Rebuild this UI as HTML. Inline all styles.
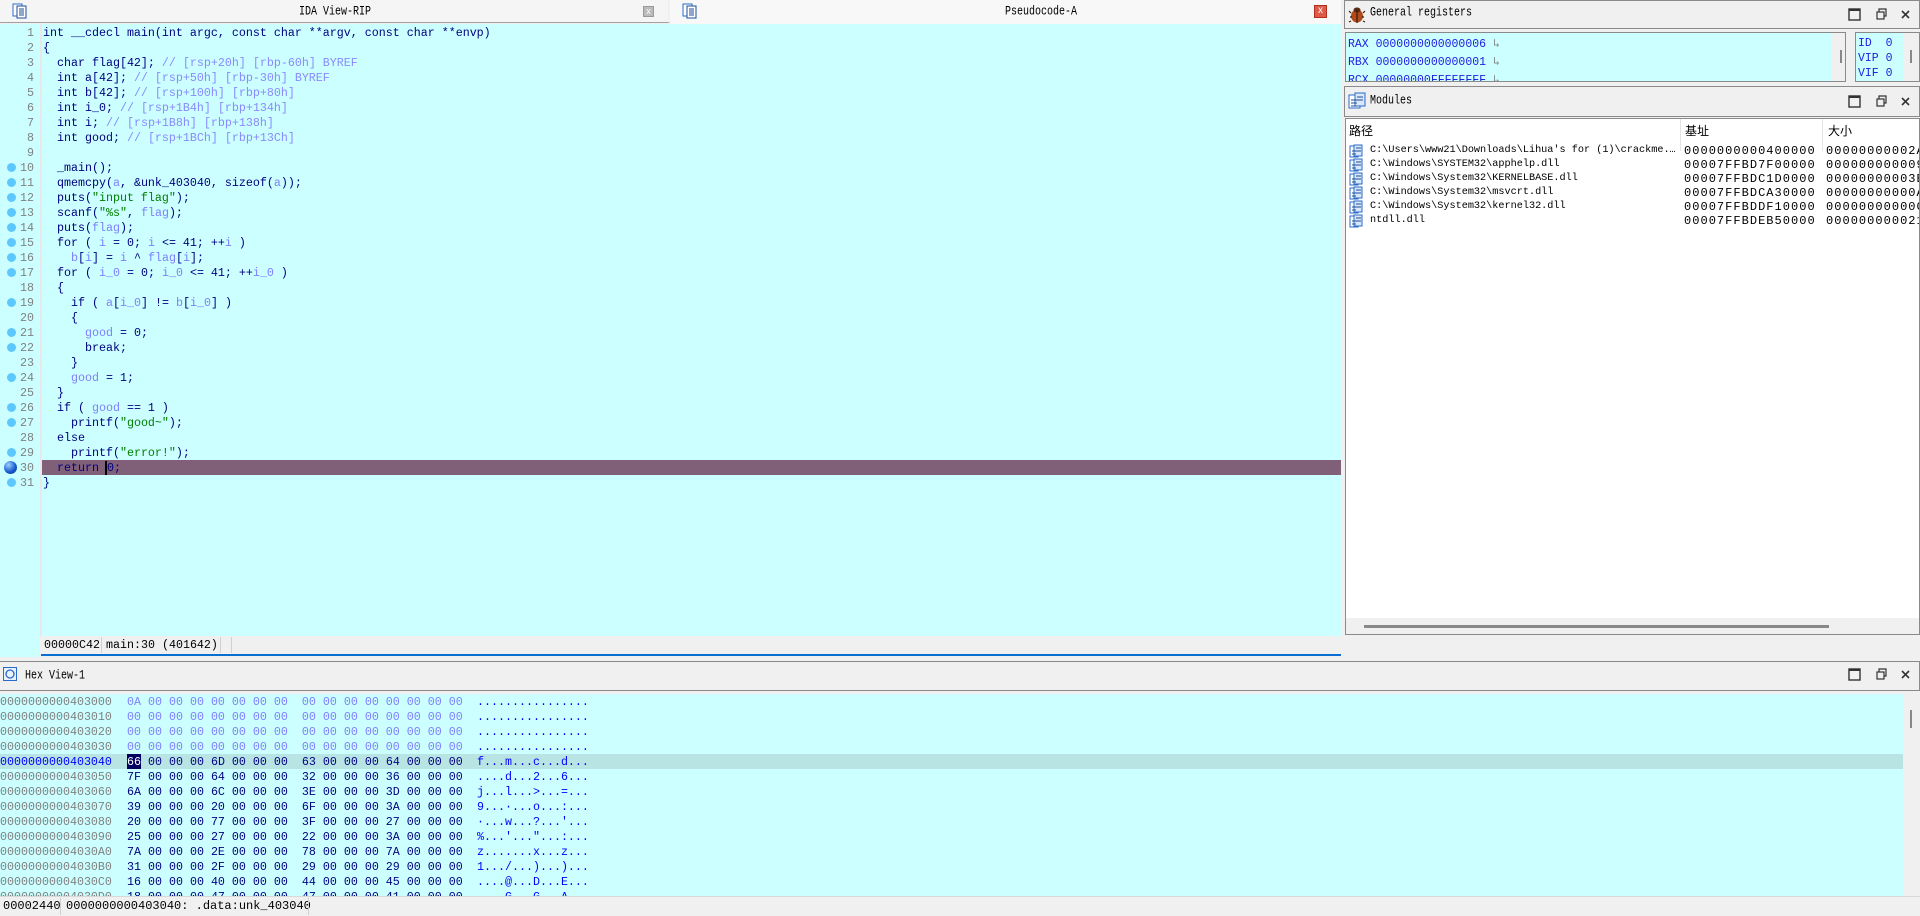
<!DOCTYPE html>
<html><head><meta charset="utf-8">
<style>
*{margin:0;padding:0;box-sizing:border-box}
body{width:1920px;height:916px;overflow:hidden;background:#f0f0f0;position:relative;font-family:"Liberation Mono",monospace}
.abs{position:absolute}
.mono{font-family:"Liberation Mono","Noto Sans CJK SC",monospace;white-space:pre}
.code{font-size:11.67px;line-height:15px;color:#000080}
.v{color:#7f7fff}.c{color:#8a8aff}.s{color:#008000}.n{color:#808080}
.ln{position:absolute;right:0;width:40px;text-align:right;padding-right:6px;color:#808080}
.dot{position:absolute;left:7px;width:9px;height:9px;border-radius:50%;background:#5cc8ff}
.title{font-size:10px;line-height:12px;color:#000;transform:scaleY(1.25);transform-origin:0 50%}
.hx{font-size:11.67px;line-height:15px}
</style></head><body>

<!-- Code panel -->
<div class="abs" style="left:0;top:0;width:1341px;height:23px;background:#f0f0f0;border-bottom:1px solid #c8c8c8"></div>
<div class="abs" style="left:0;top:0;width:668px;height:23px;background:#f5f5f5;border-bottom:1px solid #a0a0a0"></div>
<div class="abs" style="left:670px;top:0;width:671px;height:24px;background:#f8f8f8"></div>
<svg class="abs" style="left:12px;top:3px" width="16" height="16"><rect x="1" y="1" width="9" height="12" fill="#fff" stroke="#2a6ac8"/><rect x="5" y="3" width="9" height="12" fill="#fff" stroke="#1f4e9a"/><path d="M7 6h5M7 8h5M7 10h5M7 12h5" stroke="#1f4e9a"/></svg>
<div class="abs title mono" style="left:299px;top:7px">IDA View-RIP</div>
<div class="abs" style="left:643px;top:6px;width:11px;height:11px;background:#bbb;border:1px solid #999;color:#fff;font-size:9px;line-height:9px;text-align:center;font-family:'Liberation Sans'">x</div>
<svg class="abs" style="left:682px;top:3px" width="16" height="16"><rect x="1" y="1" width="9" height="12" fill="#fff" stroke="#2a6ac8"/><rect x="5" y="3" width="9" height="12" fill="#fff" stroke="#1f4e9a"/><path d="M7 6h5M7 8h5M7 10h5M7 12h5" stroke="#1f4e9a"/></svg>
<div class="abs title mono" style="left:1005px;top:7px">Pseudocode-A</div>
<div class="abs" style="left:1314px;top:5px;width:13px;height:13px;background:#e05a4a;border:1px solid #b03020;color:#fff;font-size:10px;line-height:10px;text-align:center;font-family:'Liberation Sans'">x</div>

<div class="abs" style="left:0;top:24px;width:40px;height:633px;background:#ccffff"></div>
<div class="abs" style="left:40px;top:24px;width:2px;height:612px;background:#e8e8e8"></div>
<div class="abs" style="left:42px;top:24px;width:1299px;height:612px;background:#ccffff"></div>
<div class="abs" style="left:42px;top:460px;width:1299px;height:15px;background:#806078"></div>
<div class="abs" style="left:41px;top:636px;width:1300px;height:18px;background:#f0f0f0"></div>
<div class="abs" style="left:41px;top:654px;width:1300px;height:2px;background:#0a6ed1"></div>
<div class="abs mono code" style="left:44px;top:638px;color:#000">00000C42</div>
<div class="abs" style="left:101px;top:637px;width:1px;height:16px;background:#d0d0d0"></div>
<div class="abs mono code" style="left:106px;top:638px;color:#000">main:30 (401642)</div>
<div class="abs" style="left:220px;top:637px;width:1px;height:16px;background:#d0d0d0"></div>
<div class="abs" style="left:231px;top:637px;width:1px;height:16px;background:#d0d0d0"></div>

<div class="abs mono code" style="left:0;top:26px;width:40px">
<div class="ln" style="top:0">1</div><div class="ln" style="top:15px">2</div><div class="ln" style="top:30px">3</div><div class="ln" style="top:45px">4</div><div class="ln" style="top:60px">5</div><div class="ln" style="top:75px">6</div><div class="ln" style="top:90px">7</div><div class="ln" style="top:105px">8</div><div class="ln" style="top:120px">9</div><div class="ln" style="top:135px">10</div><div class="ln" style="top:150px">11</div><div class="ln" style="top:165px">12</div><div class="ln" style="top:180px">13</div><div class="ln" style="top:195px">14</div><div class="ln" style="top:210px">15</div><div class="ln" style="top:225px">16</div><div class="ln" style="top:240px">17</div><div class="ln" style="top:255px">18</div><div class="ln" style="top:270px">19</div><div class="ln" style="top:285px">20</div><div class="ln" style="top:300px">21</div><div class="ln" style="top:315px">22</div><div class="ln" style="top:330px">23</div><div class="ln" style="top:345px">24</div><div class="ln" style="top:360px">25</div><div class="ln" style="top:375px">26</div><div class="ln" style="top:390px">27</div><div class="ln" style="top:405px">28</div><div class="ln" style="top:420px">29</div><div class="ln" style="top:435px">30</div><div class="ln" style="top:450px">31</div>
</div>
<div class="dot" style="top:163px"></div><div class="dot" style="top:178px"></div><div class="dot" style="top:193px"></div><div class="dot" style="top:208px"></div><div class="dot" style="top:223px"></div><div class="dot" style="top:238px"></div><div class="dot" style="top:253px"></div><div class="dot" style="top:268px"></div><div class="dot" style="top:298px"></div><div class="dot" style="top:328px"></div><div class="dot" style="top:343px"></div><div class="dot" style="top:373px"></div><div class="dot" style="top:403px"></div><div class="dot" style="top:418px"></div><div class="dot" style="top:448px"></div><div class="dot" style="top:478px"></div>
<div class="abs" style="left:4px;top:461px;width:13px;height:13px;border-radius:50%;background:radial-gradient(circle at 35% 30%,#9fd0ff,#1a5fd0 55%,#0a2a80)"></div>

<div class="abs mono code" style="left:43px;top:26px">int __cdecl main(int argc, const char **argv, const char **envp)
{
  char flag[42]; <span class="c">// [rsp+20h] [rbp-60h] BYREF</span>
  int a[42]; <span class="c">// [rsp+50h] [rbp-30h] BYREF</span>
  int b[42]; <span class="c">// [rsp+100h] [rbp+80h]</span>
  int i_0; <span class="c">// [rsp+1B4h] [rbp+134h]</span>
  int i; <span class="c">// [rsp+1B8h] [rbp+138h]</span>
  int good; <span class="c">// [rsp+1BCh] [rbp+13Ch]</span>

  _main();
  qmemcpy(<span class="v">a</span>, &amp;unk_403040, sizeof(<span class="v">a</span>));
  puts(<span class="s">"input flag"</span>);
  scanf(<span class="s">"%s"</span>, <span class="v">flag</span>);
  puts(<span class="v">flag</span>);
  for ( <span class="v">i</span> = 0; <span class="v">i</span> &lt;= 41; ++<span class="v">i</span> )
    <span class="v">b</span>[<span class="v">i</span>] = <span class="v">i</span> ^ <span class="v">flag</span>[<span class="v">i</span>];
  for ( <span class="v">i_0</span> = 0; <span class="v">i_0</span> &lt;= 41; ++<span class="v">i_0</span> )
  {
    if ( <span class="v">a</span>[<span class="v">i_0</span>] != <span class="v">b</span>[<span class="v">i_0</span>] )
    {
      <span class="v">good</span> = 0;
      break;
    }
    <span class="v">good</span> = 1;
  }
  if ( <span class="v">good</span> == 1 )
    printf(<span class="s">"good~"</span>);
  else
    printf(<span class="s">"error!"</span>);
  return <span style="border-left:2px solid #000;margin-left:-1px">0</span>;
}</div>

<!-- General registers -->
<div class="abs" style="left:1344px;top:0;width:576px;height:29px;border:1px solid #8a8a8a;background:#f0f0f0"></div>
<svg class="abs" style="left:1348px;top:5px" width="18" height="18"><ellipse cx="9" cy="11" rx="6" ry="6.5" fill="#b04a1a"/><ellipse cx="9" cy="5" rx="3.5" ry="2.5" fill="#5a2a10"/><path d="M9 5v13M3 8l-2-2M15 8l2-2M2 12h2M14 12h2M3 16l-2 1M15 16l2 1" stroke="#3a1a08" stroke-width="1.2"/></svg>
<div class="abs title mono" style="left:1370px;top:8px">General registers</div>
<div class="abs" style="left:1345px;top:32px;width:501px;height:50px;border:1px solid #8a8a8a;background:#ccffff;overflow:hidden">
<div class="mono" style="font-size:11.5px;line-height:18px;color:#2020e0;padding:3px 0 0 2px">RAX 0000000000000006 <span style="color:#888">↳</span>
RBX 0000000000000001 <span style="color:#888">↳</span>
RCX 00000000FFFFFFFF <span style="color:#888">↳</span></div>
</div>
<div class="abs" style="left:1832px;top:33px;width:13px;height:48px;background:#f0f0f0"></div>
<div class="abs" style="left:1840px;top:50px;width:2px;height:13px;background:#888"></div>
<div class="abs" style="left:1855px;top:32px;width:65px;height:50px;border:1px solid #8a8a8a;background:#ccffff">
<div class="mono" style="font-size:11.5px;line-height:15px;color:#2020e0;padding:3px 0 0 2px">ID  0
VIP 0
VIF 0</div></div>
<div class="abs" style="left:1903px;top:33px;width:16px;height:48px;background:#f0f0f0"></div>
<div class="abs" style="left:1910px;top:50px;width:2px;height:13px;background:#888"></div>

<!-- Modules -->
<div class="abs" style="left:1344px;top:86px;width:576px;height:31px;border:1px solid #8a8a8a;background:#f0f0f0"></div>
<svg class="abs" style="left:1348px;top:92px" width="18" height="18"><rect x="1" y="3" width="11" height="13" fill="#fff" stroke="#2a6ac8"/><rect x="7" y="1" width="10" height="13" fill="#dbe8fb" stroke="#2a6ac8"/><path d="M3 8h6M3 11h6M3 14h6M9 5h6M9 8h6" stroke="#1f4e9a"/></svg>
<div class="abs title mono" style="left:1370px;top:96px">Modules</div>
<div class="abs" style="left:1345px;top:118px;width:575px;height:517px;border:1px solid #8a8a8a;background:#fff"></div>
<div class="abs" style="left:1346px;top:618px;width:573px;height:16px;background:#f0f0f0"></div>
<div class="abs" style="left:1364px;top:625px;width:465px;height:3px;background:#888"></div>
<div class="abs" style="left:1680px;top:119px;width:1px;height:32px;background:#e4e4e4"></div>
<div class="abs" style="left:1822px;top:119px;width:1px;height:32px;background:#e4e4e4"></div>
<div class="abs" style="left:1349px;top:122px;font-family:'Noto Sans CJK SC',sans-serif;font-size:12px;color:#000">路径</div>
<div class="abs" style="left:1685px;top:122px;font-family:'Noto Sans CJK SC',sans-serif;font-size:12px;color:#000">基址</div>
<div class="abs" style="left:1828px;top:122px;font-family:'Noto Sans CJK SC',sans-serif;font-size:12px;color:#000">大小</div>
<div class="abs mono" style="left:1370px;top:144px;font-size:10.2px;line-height:14px;color:#000">C:\Users\www21\Downloads\Lihua's for (1)\crackme.…
C:\Windows\SYSTEM32\apphelp.dll
C:\Windows\System32\KERNELBASE.dll
C:\Windows\System32\msvcrt.dll
C:\Windows\System32\kernel32.dll
ntdll.dll</div>
<div class="abs mono" style="left:1684px;top:144px;font-size:12px;line-height:14px;color:#000;letter-spacing:1.03px">0000000000400000
00007FFBD7F00000
00007FFBDC1D0000
00007FFBDCA30000
00007FFBDDF10000
00007FFBDEB50000</div>
<div class="abs" style="left:1826px;top:144px;width:93px;height:90px;overflow:hidden"><div class="mono" style="font-size:12px;line-height:14px;color:#000;letter-spacing:1.03px">00000000002A0000
0000000000097000
00000000003BA000
00000000000A7000
00000000000C4000
0000000000217000</div></div>
<div class="abs" style="left:1349px;top:144px">
<svg width="14" height="84"><g id="mi"><rect x="1" y="2" width="8" height="11" fill="#fff" stroke="#2a6ac8"/><rect x="5" y="1" width="8" height="11" fill="#dbe8fb" stroke="#2a6ac8"/><path d="M3 7h4M3 10h4M7 4h5M7 7h5" stroke="#1f4e9a"/></g><use href="#mi" y="14"/><use href="#mi" y="28"/><use href="#mi" y="42"/><use href="#mi" y="56"/><use href="#mi" y="70"/></svg></div>

<!-- window buttons -->
<svg class="abs" style="left:1848px;top:8px" width="70" height="14"><rect x="1" y="1" width="11" height="11" fill="none" stroke="#333" stroke-width="1.4"/><rect x="1" y="1" width="11" height="2" fill="#333"/><rect x="29" y="4" width="7" height="7" fill="none" stroke="#333" stroke-width="1.2"/><path d="M31 4V1h7v7h-2" fill="none" stroke="#333" stroke-width="1.2"/><path d="M54 3l7 7M61 3l-7 7" stroke="#333" stroke-width="1.6"/></svg>
<svg class="abs" style="left:1848px;top:95px" width="70" height="14"><rect x="1" y="1" width="11" height="11" fill="none" stroke="#333" stroke-width="1.4"/><rect x="1" y="1" width="11" height="2" fill="#333"/><rect x="29" y="4" width="7" height="7" fill="none" stroke="#333" stroke-width="1.2"/><path d="M31 4V1h7v7h-2" fill="none" stroke="#333" stroke-width="1.2"/><path d="M54 3l7 7M61 3l-7 7" stroke="#333" stroke-width="1.6"/></svg>

<!-- Hex view -->
<div class="abs" style="left:0;top:661px;width:1920px;height:30px;border:1px solid #8a8a8a;border-left:none;background:#f0f0f0"></div>
<svg class="abs" style="left:3px;top:667px" width="14" height="14"><rect x="0.5" y="0.5" width="13" height="13" fill="#eaf2ff" stroke="#2a6ac8"/><circle cx="7" cy="7" r="4" fill="none" stroke="#2a6ac8" stroke-width="1.3"/></svg>
<div class="abs title mono" style="left:25px;top:671px">Hex View-1</div>
<svg class="abs" style="left:1848px;top:668px" width="70" height="14"><rect x="1" y="1" width="11" height="11" fill="none" stroke="#333" stroke-width="1.4"/><rect x="1" y="1" width="11" height="2" fill="#333"/><rect x="29" y="4" width="7" height="7" fill="none" stroke="#333" stroke-width="1.2"/><path d="M31 4V1h7v7h-2" fill="none" stroke="#333" stroke-width="1.2"/><path d="M54 3l7 7M61 3l-7 7" stroke="#333" stroke-width="1.6"/></svg>
<div class="abs" style="left:0;top:694px;width:1903px;height:202px;background:#ccffff"></div>
<div class="abs" style="left:1903px;top:694px;width:17px;height:202px;background:#f0f0f0"></div>
<div class="abs" style="left:1910px;top:710px;width:2px;height:18px;background:#888"></div>
<div class="abs" style="left:0;top:754px;width:1903px;height:15px;background:#b8e4e4"></div>
<div class="abs" style="left:127px;top:754px;width:14px;height:15px;background:#000060"></div>
<div class="abs mono hx" style="left:0;top:695px;color:#808080">0000000000403000
0000000000403010
0000000000403020
0000000000403030
<span style="color:#0000ff">0000000000403040</span>
0000000000403050
0000000000403060
0000000000403070
0000000000403080
0000000000403090
00000000004030A0
00000000004030B0
00000000004030C0
00000000004030D0</div>
<div class="abs mono hx" style="left:127px;top:695px;color:#000080"><span style="color:#8080ff">0A 00 00 00 00 00 00 00  00 00 00 00 00 00 00 00
00 00 00 00 00 00 00 00  00 00 00 00 00 00 00 00
00 00 00 00 00 00 00 00  00 00 00 00 00 00 00 00
00 00 00 00 00 00 00 00  00 00 00 00 00 00 00 00</span>
<span style="color:#fff">66</span> 00 00 00 6D 00 00 00  63 00 00 00 64 00 00 00
7F 00 00 00 64 00 00 00  32 00 00 00 36 00 00 00
6A 00 00 00 6C 00 00 00  3E 00 00 00 3D 00 00 00
39 00 00 00 20 00 00 00  6F 00 00 00 3A 00 00 00
20 00 00 00 77 00 00 00  3F 00 00 00 27 00 00 00
25 00 00 00 27 00 00 00  22 00 00 00 3A 00 00 00
7A 00 00 00 2E 00 00 00  78 00 00 00 7A 00 00 00
31 00 00 00 2F 00 00 00  29 00 00 00 29 00 00 00
16 00 00 00 40 00 00 00  44 00 00 00 45 00 00 00
18 00 00 00 47 00 00 00  47 00 00 00 41 00 00 00</div>
<div class="abs mono hx" style="left:477px;top:695px;color:#0000ff">................
................
................
................
f...m...c...d...
....d...2...6...
j...l...&gt;...=...
9...·...o...:...
·...w...?...'...
%...'..."...:...
z.......x...z...
1.../...)...)...
....@...D...E...
....G...G...A...</div>
<div class="abs" style="left:0;top:896px;width:1920px;height:20px;background:#f0f0f0;border-top:1px solid #d8d8d8"></div>
<div class="abs mono" style="left:3px;top:899px;font-size:12px;color:#000">00002440</div>
<div class="abs" style="left:60px;top:898px;width:1px;height:17px;background:#d0d0d0"></div>
<div class="abs mono" style="left:66px;top:899px;font-size:12px;color:#000">0000000000403040: .data:unk_403040</div>
<div class="abs" style="left:308px;top:898px;width:1px;height:17px;background:#d0d0d0"></div>
</body></html>
